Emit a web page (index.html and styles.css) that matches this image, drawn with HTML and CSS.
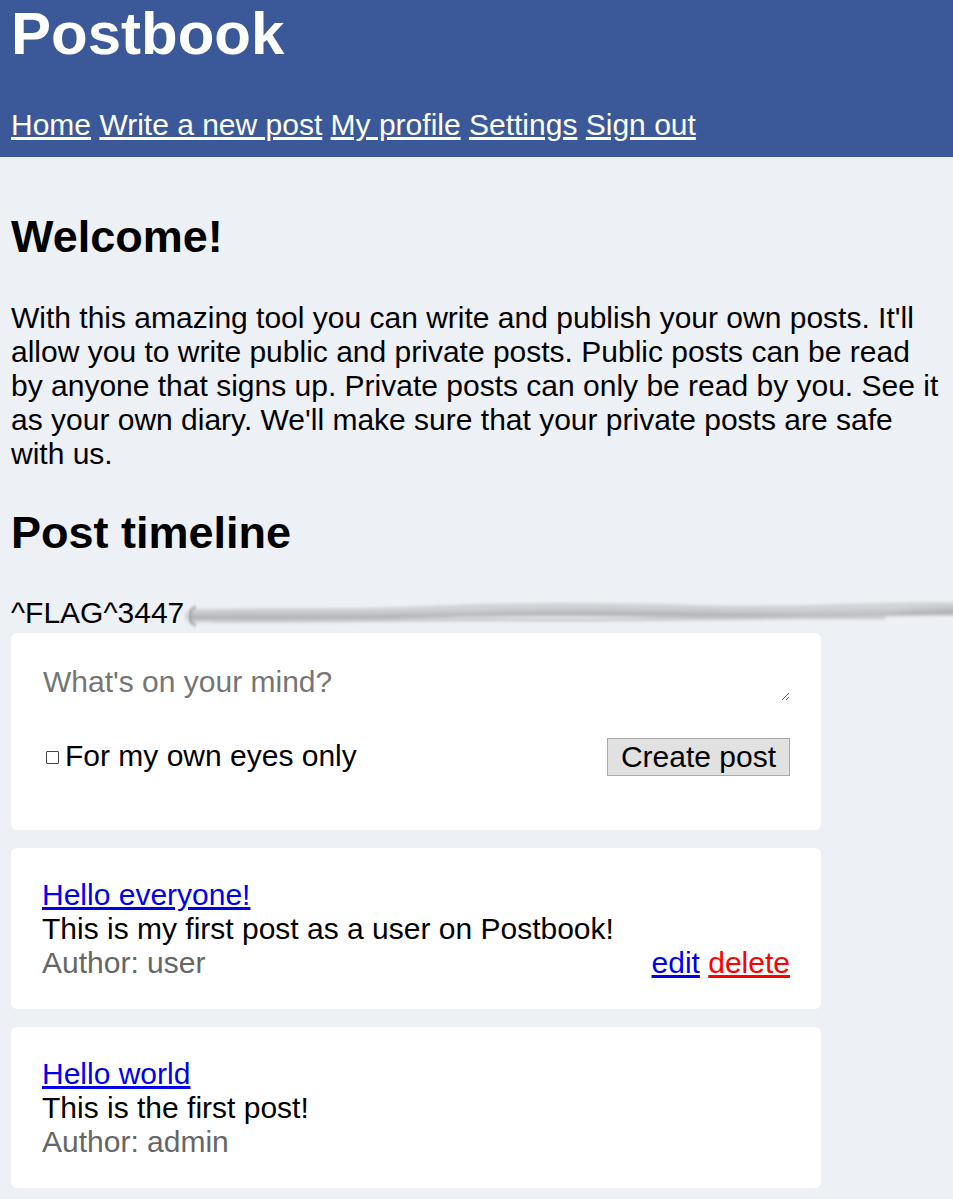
FILE: index.html
```html
<!DOCTYPE html>
<html lang="en">
<head>
<meta charset="utf-8">
<title>Postbook</title>
<link rel="stylesheet" href="styles.css">
</head>
<body>
<header class="site-header">
  <h1 class="brand">Postbook</h1>
  <nav class="nav">
    <a href="#">Home</a> <a href="#">Write a new post</a> <a href="#">My profile</a> <a href="#">Settings</a> <a href="#">Sign out</a>
  </nav>
</header>
<main class="main">
  <h2 class="heading heading-first">Welcome!</h2>
  <p class="intro">With this amazing tool you can write and publish your own posts. It'll allow you to write public and private posts. Public posts can be read by anyone that signs up. Private posts can only be read by you. See it as your own diary. We'll make sure that your private posts are safe with us.</p>
  <h2 class="heading">Post timeline</h2>
  <div class="flag">^FLAG^3447<svg class="smudge" width="770" height="30" viewBox="0 0 770 30" aria-hidden="true">
      <defs>
        <filter id="blur" x="-5%" y="-50%" width="110%" height="200%"><feGaussianBlur stdDeviation="1.6"/></filter>
      </defs>
      <g filter="url(#blur)" fill="none" stroke-linecap="round">
        <path d="M8 16 C 90 14, 160 17, 240 13 S 420 9, 520 12 S 680 8, 770 9" stroke="#d2d4d8" stroke-width="14"/>
        <path d="M8 17 C 80 16, 150 19, 230 15 S 400 12, 500 14 S 670 11, 770 12" stroke="#b4b6ba" stroke-width="6"/>
        <path d="M10 13 C 100 12, 200 14, 300 11 S 480 10, 600 12 S 720 8, 770 7" stroke="#c6c8cc" stroke-width="4"/>
        <path d="M30 21 C 120 22, 260 19, 360 20 S 560 17, 700 18" stroke="#c9cbcf" stroke-width="3"/>
      </g>
      <path d="M12 7 C 4 8, 3 24, 12 25" fill="none" stroke="#9a9ca0" stroke-width="2.5" filter="url(#blur)"/>
    </svg></div>

  <section class="card composer">
    <textarea class="composer-input" placeholder="What's on your mind?"></textarea>
    <div class="composer-row">
      <label class="private"><input type="checkbox" class="check">For my own eyes only</label>
      <button class="btn" type="button">Create post</button>
    </div>
  </section>

  <article class="card post">
    <a href="#" class="post-title">Hello everyone!</a>
    <div class="post-body">This is my first post as a user on Postbook!</div>
    <div class="post-meta">
      <span class="author">Author: user</span>
      <span class="actions"><a href="#" class="edit">edit</a> <a href="#" class="delete">delete</a></span>
    </div>
  </article>

  <article class="card post">
    <a href="#" class="post-title">Hello world</a>
    <div class="post-body">This is the first post!</div>
    <div class="post-meta">
      <span class="author">Author: admin</span>
    </div>
  </article>
</main>
</body>
</html>
```

FILE: styles.css
```css
html, body {
  overflow-x: hidden;
}

body {
  margin: 0;
  background: #edf0f5;
  font-family: "Liberation Sans", Arial, sans-serif;
  font-size: 30px;
  line-height: 34px;
  color: #000;
}

.site-header {
  background: #3b5998;
  color: #fff;
  padding: 0 11px 15px;
}

.brand {
  margin: 0 0 40px;
  font-size: 60px;
  line-height: 68px;
  font-weight: bold;
}

.nav a {
  color: #fff;
  text-decoration: underline;
}

.main {
  padding: 0 11px;
}

.heading {
  font-size: 45px;
  line-height: 51px;
  font-weight: bold;
  margin: 36px 0 0;
}

.heading-first {
  margin-top: 54px;
}

.intro {
  margin: 39px 0 0;
}

.flag {
  margin-top: 38px;
  height: 34px;
  white-space: nowrap;
}

.smudge {
  display: inline-block;
  vertical-align: -7px;
}

.card {
  background: #fff;
  border-radius: 6px;
  width: 810px;
  box-sizing: border-box;
}

.composer {
  margin-top: 3px;
  padding: 31px 31px 54px;
}

.composer-input {
  display: block;
  width: 100%;
  height: 37px;
  margin: 0;
  padding: 1px 0 0 1px;
  box-sizing: border-box;
  border: none;
  outline: none;
  resize: vertical;
  font-family: "Liberation Sans", Arial, sans-serif;
  font-size: 30px;
  line-height: 34px;
  background: #fff;
  color: #000;
}

.composer-input::placeholder {
  color: #757575;
}

.composer-row {
  margin-top: 37px;
  display: flex;
  justify-content: space-between;
  align-items: center;
}

.private {
  display: flex;
  align-items: center;
  margin-top: -3px;
}

.check {
  appearance: none;
  -webkit-appearance: none;
  width: 13px;
  height: 13px;
  margin: 3px 6px 0 4px;
  border: 1px solid #444;
  border-radius: 1px;
  background: #fff;
  box-sizing: border-box;
}

.btn {
  font-family: "Liberation Sans", Arial, sans-serif;
  font-size: 30px;
  line-height: 34px;
  padding: 1px 13px;
  background: #e1e1e1;
  border: 1px solid #a9a9a9;
  border-radius: 0;
  color: #000;
}

.post {
  margin-top: 18px;
  padding: 30px 31px 29px;
}

.post-title {
  color: #0000ee;
  text-decoration: underline;
}

.post-meta {
  display: flex;
  justify-content: space-between;
}

.author {
  color: #666;
}

.edit {
  color: #0000ee;
}

.delete {
  color: #ff0000;
}
```
